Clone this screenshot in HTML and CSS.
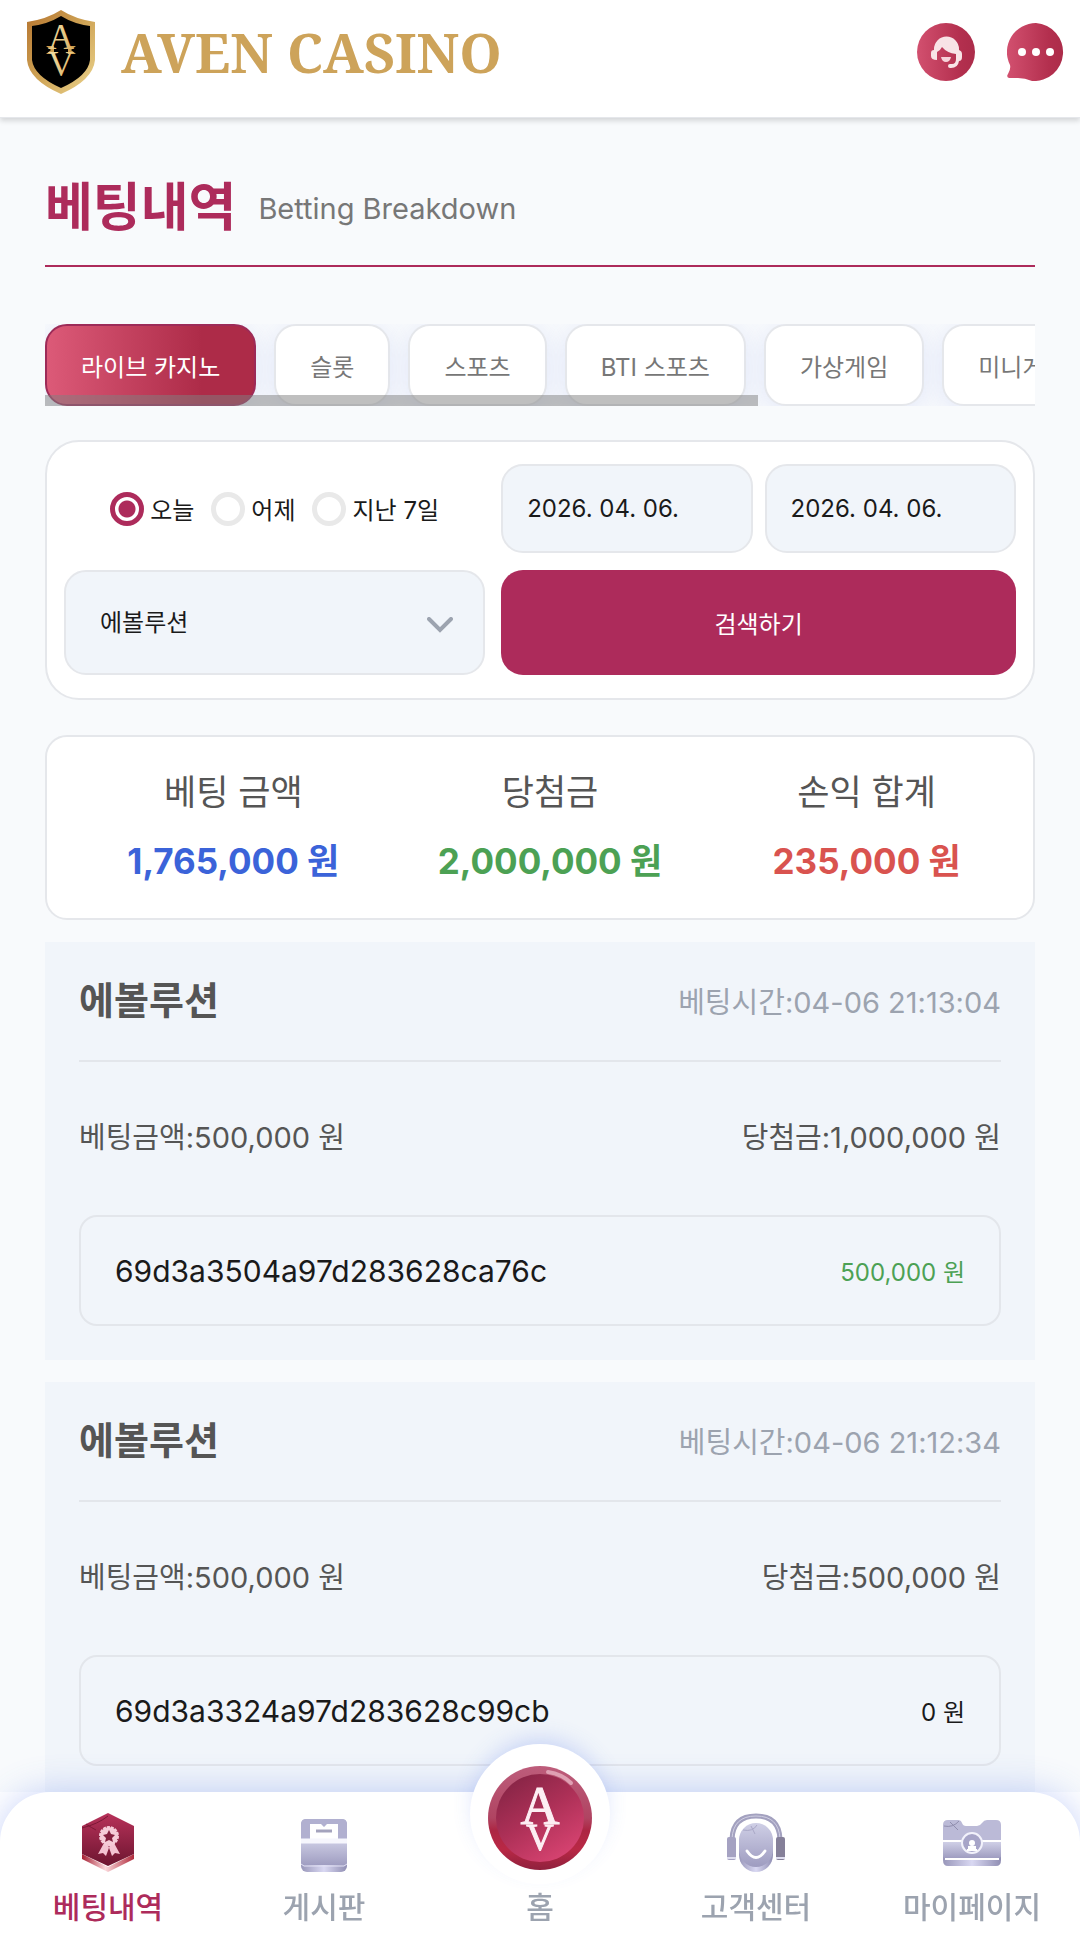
FILE: index.html
```html
<!DOCTYPE html>
<html lang="ko">
<head>
<meta charset="utf-8">
<meta name="viewport" content="width=device-width, initial-scale=1">
<title>AVEN CASINO - 베팅내역</title>
<link rel="stylesheet" href="styles.css">
</head>
<body>
<header class="header">
  <a class="brand" href="#">
    <svg class="brand-mark" viewBox="0 0 68 84" aria-hidden="true">
      <defs>
        <linearGradient id="gold" x1="0" y1="0" x2="1" y2="1">
          <stop offset="0" stop-color="#b5742f"/>
          <stop offset=".5" stop-color="#cfa456"/>
          <stop offset="1" stop-color="#ecd58f"/>
        </linearGradient>
        <linearGradient id="goldText" x1="0" y1="0" x2="1" y2="1">
          <stop offset="0" stop-color="#f6e6b0"/>
          <stop offset="1" stop-color="#d9ab5c"/>
        </linearGradient>
      </defs>
      <path d="M34 0Q48 9 68 12V50Q66 70 34 84Q2 70 0 50V12Q20 9 34 0Z" fill="url(#gold)"/>
      <path d="M34 6Q47 14 63 16V50Q61 66 34 78Q7 66 5 50V16Q21 14 34 6Z" fill="#000"/>
      <path d="M19 36l5 4-5 4h8v-8zM49 36l-5 4 5 4h-8v-8z" fill="#d0a050"/>
      <text class="mark-letter" x="34" y="39" font-size="36" fill="url(#goldText)">A</text>
      <text class="mark-letter" x="34" y="66" font-size="36" fill="url(#goldText)">V</text>
    </svg>
    <span class="brand-name">AVEN CASINO</span>
  </a>
  <div class="header-actions">
    <button class="icon-button" type="button" aria-label="고객센터">
      <svg viewBox="0 0 58 58" aria-hidden="true">
        <defs>
          <linearGradient id="rose" x1="0" y1="0" x2="1" y2="0">
            <stop offset="0" stop-color="#d2506f"/>
            <stop offset=".75" stop-color="#b32f4e"/>
            <stop offset="1" stop-color="#ac2c4a"/>
          </linearGradient>
        </defs>
        <circle cx="29" cy="29" r="29" fill="url(#rose)"/>
        <path d="M17 27V26a12 12 0 0 1 25 0v1q3 1 3 4v3q0 4-3 4-1 7-8 7h-1a2 2 0 0 1 0-4h2q4 0 4-5v-5q-9-1-14-7-2 4-5 5v8q-6 0-6-4v-3q0-3 3-3z" fill="#f8e3e6"/>
        <path d="M24 34h10q-1 5-5 5t-5-5z" fill="#f6d3da"/>
      </svg>
    </button>
    <button class="icon-button" type="button" aria-label="채팅">
      <svg viewBox="0 0 58 58" aria-hidden="true">
        <path d="M29 0a29 29 0 1 1-4 58q-7-3-14-3H2q-3-1-1-4 3-5 2-9A29 29 0 0 1 29 0z" fill="url(#rose)"/>
        <circle cx="15" cy="29" r="4" fill="#fff"/>
        <circle cx="29" cy="29" r="4" fill="#fff"/>
        <circle cx="43" cy="29" r="4" fill="#fff"/>
      </svg>
    </button>
  </div>
</header>

<main class="page">
  <div class="page-title">
    <h1>베팅내역</h1>
    <p>Betting Breakdown</p>
  </div>

  <div class="tabs">
    <div class="tab-list">
      <button class="tab tab-active" type="button">라이브 카지노</button>
      <button class="tab" type="button">슬롯</button>
      <button class="tab" type="button">스포츠</button>
      <button class="tab" type="button">BTI 스포츠</button>
      <button class="tab" type="button">가상게임</button>
      <button class="tab" type="button">미니게임</button>
    </div>
    <div class="tab-scrollbar"></div>
  </div>

  <form class="filter">
    <div class="periods">
      <label class="period"><input type="radio" name="period" checked><span>오늘</span></label>
      <label class="period"><input type="radio" name="period"><span>어제</span></label>
      <label class="period"><input type="radio" name="period"><span>지난 7일</span></label>
    </div>
    <div class="dates">
      <input class="field date" type="text" aria-label="시작일" value="2026. 04. 06.">
      <input class="field date" type="text" aria-label="종료일" value="2026. 04. 06.">
    </div>
    <div class="provider">
      <select class="field" aria-label="게임사"><option>에볼루션</option></select>
      <svg class="chevron" viewBox="0 0 26 16" aria-hidden="true"><path d="M2 2l11 11L24 2" fill="none" stroke="#9ca3af" stroke-width="4" stroke-linecap="round"/></svg>
    </div>
    <button class="search" type="button">검색하기</button>
  </form>

  <dl class="summary">
    <div><dt>베팅 금액</dt><dd class="blue">1,765,000 원</dd></div>
    <div><dt>당첨금</dt><dd class="green">2,000,000 원</dd></div>
    <div><dt>손익 합계</dt><dd class="red">235,000 원</dd></div>
  </dl>

  <article class="bet">
    <div class="bet-head">
      <h2>에볼루션</h2>
      <span class="bet-time">베팅시간:04-06 21:13:04</span>
    </div>
    <div class="bet-amounts"><span>베팅금액:500,000 원</span><span>당첨금:1,000,000 원</span></div>
    <div class="bet-round"><span>69d3a3504a97d283628ca76c</span><span class="bet-result green">500,000 원</span></div>
  </article>

  <article class="bet">
    <div class="bet-head">
      <h2>에볼루션</h2>
      <span class="bet-time">베팅시간:04-06 21:12:34</span>
    </div>
    <div class="bet-amounts"><span>베팅금액:500,000 원</span><span>당첨금:500,000 원</span></div>
    <div class="bet-round"><span>69d3a3324a97d283628c99cb</span><span class="bet-result">0 원</span></div>
  </article>
</main>

<nav class="bottom-nav">
  <div class="nav-list">
    <a class="nav-item nav-current" href="#">
      <svg class="nav-icon" viewBox="0 0 60 60" aria-hidden="true">
        <defs>
          <linearGradient id="wine" x1="0" y1="0" x2="0" y2="1">
            <stop offset="0" stop-color="#b8325a"/>
            <stop offset="1" stop-color="#6d1530"/>
          </linearGradient>
          <linearGradient id="wineEdge" x1="0" y1="0" x2="1" y2="0">
            <stop offset="0" stop-color="#a51f33"/>
            <stop offset=".45" stop-color="#fbd9dc"/>
            <stop offset="1" stop-color="#b02a3c"/>
          </linearGradient>
          <linearGradient id="lilac" x1="0" y1="0" x2="0" y2="1">
            <stop offset="0" stop-color="#cfcfe6"/>
            <stop offset="1" stop-color="#9e9cc0"/>
          </linearGradient>
          <linearGradient id="lilacEdge" x1="0" y1="0" x2="1" y2="0">
            <stop offset="0" stop-color="#9997ba"/>
            <stop offset=".5" stop-color="#d9d8f2"/>
            <stop offset="1" stop-color="#908eb3"/>
          </linearGradient>
        </defs>
        <path d="M4 42l26 13 26-13v5L30 60 4 47z" fill="url(#wineEdge)"/>
        <path d="M30 1l26 13v28L30 54 4 42V14z" fill="url(#wine)"/>
        <path d="M4 16q16-4 26-12M8 12q6 4 10 6" fill="none" stroke="#7c1836"/>
        <path d="M26 31l-6 11 5-1 3 3 4-11zM36 31l6 11-5-1-3 3-4-11z" fill="#f4c3d2"/>
        <circle cx="31" cy="24" r="9" fill="#f6cbd8" stroke="#f6cbd8" stroke-width="2" stroke-dasharray="3 1"/>
        <path d="M31 18l2 4 4 1-3 3 1 4-4-2-4 2 1-4-3-3 4-1z" fill="#85203f"/>
      </svg>
      <span>베팅내역</span>
    </a>
    <a class="nav-item" href="#">
      <svg class="nav-icon" viewBox="0 0 60 60" aria-hidden="true">
        <rect x="7" y="7" width="46" height="53" rx="6" fill="url(#lilacEdge)"/>
        <path d="M7 27V12q0-5 5-5h36q5 0 5 5v15z" fill="#b1b0d0"/>
        <path d="M16 27V12h11l3 3 3-3h11v15z" fill="#fff"/>
        <path d="M22 19h16" stroke="#a4a3bd" stroke-width="3"/>
        <path d="M7 27h46v26q-3 2-5 0H12q-2 2-5 0z" fill="url(#lilac)"/>
        <path d="M7 29h46" stroke="#f6f6fd" stroke-width="5"/>
        <path d="M7 52l3 2h40l3-2" fill="none" stroke="#e3e2f5"/>
      </svg>
      <span>게시판</span>
    </a>
    <a class="nav-item nav-home" href="#">
      <span class="home-badge">
        <svg viewBox="0 0 104 104" aria-hidden="true">
          <defs>
            <linearGradient id="rim" x1="0" y1="0" x2="0" y2="1">
              <stop offset="0" stop-color="#bd5d7b"/>
              <stop offset=".5" stop-color="#b04462"/>
              <stop offset=".62" stop-color="#ac2643"/>
              <stop offset=".8" stop-color="#b92845"/>
              <stop offset="1" stop-color="#8f203d"/>
            </linearGradient>
            <linearGradient id="face" x1=".1" y1="0" x2=".75" y2="1">
              <stop offset="0" stop-color="#812343"/>
              <stop offset=".5" stop-color="#ad3057"/>
              <stop offset="1" stop-color="#d94472"/>
            </linearGradient>
          </defs>
          <circle cx="52" cy="52" r="52" fill="url(#rim)"/>
          <circle cx="52" cy="52" r="44" fill="url(#face)"/>
          <path d="M60 6q14 2 23 11" fill="none" stroke="#dfa0b3" stroke-width="4" stroke-linecap="round"/>
          <text class="mark-letter" x="52" y="58" font-size="54" fill="#fdeef3" stroke="#fdeef3">A</text>
          <text class="mark-letter" x="52" y="84" font-size="38" fill="#fdeef3" stroke="#fdeef3">V</text>
        </svg>
      </span>
      <span>홈</span>
    </a>
    <a class="nav-item" href="#">
      <svg class="nav-icon" viewBox="0 0 60 60" aria-hidden="true">
        <path d="M6 27Q7 4 30 4t24 23" fill="none" stroke="#a3a1bf" stroke-width="5"/>
        <path d="M6 27Q7 4 30 4t24 23" fill="none" stroke="#d0cfe3" stroke-width="1"/>
        <rect x="13" y="14" width="34" height="46" rx="17" fill="url(#lilacEdge)"/>
        <rect x="13" y="11" width="34" height="44" rx="17" fill="url(#lilac)"/>
        <path d="M17 18q10 2 14-5M25 14l4 8" fill="none" stroke="#a9a7c6"/>
        <path d="M21 39q9 13 18 0" fill="none" stroke="#fff" stroke-width="3" stroke-linecap="round"/>
        <rect x="1" y="25" width="9" height="23" rx="2" fill="#a5a2c2"/>
        <rect x="50" y="25" width="9" height="23" rx="2" fill="#858099"/>
        <path d="M1 46h9M50 46h9" stroke="#deddef" stroke-width="2"/>
      </svg>
      <span>고객센터</span>
    </a>
    <a class="nav-item" href="#">
      <svg class="nav-icon" viewBox="0 0 60 60" aria-hidden="true">
        <path d="M1 40h58v8q0 6-5 6H6q-5 0-5-6z" fill="url(#lilacEdge)"/>
        <path d="M1 28V13q0-5 5-5h10q3 0 4 3t4 3h11q3 0 5-3t5-3h9q5 0 5 5v15z" fill="#bbbad7"/>
        <path d="M1 30h58v15q-3 2-5 1H6q-2 1-5-1z" fill="url(#lilac)"/>
        <path d="M1 29h58M3 47h54" stroke="#fff" stroke-width="2"/>
        <path d="M2 14q9 2 15-5M8 10l8 8" fill="none" stroke="#908eae"/>
        <circle cx="30" cy="31" r="10" fill="#a7a5c8" stroke="#f2f2fb" stroke-width="2"/>
        <circle cx="30" cy="31" r="3" fill="#fff"/>
        <path d="M26 34h8v3h1v2H25v-2h1z" fill="#fff"/>
      </svg>
      <span>마이페이지</span>
    </a>
  </div>
</nav>
</body>
</html>
```

FILE: styles.css
```css
* {
  box-sizing: border-box;
}

body {
  margin: 0;
  min-height: 100vh;
  background: #f8fafc;
  color: #1a1a1a;
  font-family: Inter, "Noto Sans CJK KR", sans-serif;
  font-size: 24px;
}

h1, h2, p, dl, dd {
  margin: 0;
}

a {
  color: inherit;
  text-decoration: none;
}

button, input, select {
  margin: 0;
  font: inherit;
  color: inherit;
}

svg {
  display: block;
}

.mark-letter {
  font-family: "Liberation Serif", serif;
  text-anchor: middle;
}

/* Header */
.header {
  display: flex;
  align-items: center;
  justify-content: space-between;
  height: 118px;
  padding: 0 15px 14px 26px;
  background: #fff;
  border-bottom: 1px solid #e5e7eb;
  box-shadow: 0 3px 5px rgba(0, 0, 0, 0.14);
}

.brand {
  display: flex;
  align-items: center;
  gap: 25px;
}

.brand-mark {
  width: 70px;
  height: 84px;
}

.brand-name {
  color: #cda35a;
  font-family: "Noto Serif", "Liberation Serif", serif;
  font-size: 54px;
  font-weight: 700;
  line-height: 60px;
}

.header-actions {
  display: flex;
  gap: 32px;
}

.icon-button {
  width: 58px;
  height: 58px;
  padding: 0;
  border: 0;
  background: none;
}

.page {
  padding: 50px 45px 155px;
}

/* Title */
.page-title {
  display: flex;
  align-items: center;
  gap: 22px;
  padding-bottom: 17px;
  border-bottom: 2px solid #ad2b5b;
}

.page-title h1 {
  color: #ad2b5b;
  font-size: 52px;
  font-weight: 700;
  line-height: 80px;
}

.page-title p {
  color: #777;
  font-size: 29px;
}

/* Category tabs */
.tabs {
  position: relative;
  margin-top: 57px;
  overflow: hidden;
}

.tab-list {
  display: flex;
  gap: 18px;
}

.tab {
  flex: none;
  height: 82px;
  padding: 0 34px;
  border: 2px solid #e5e7eb;
  border-radius: 22px;
  background: #fff;
  box-shadow: 0 4px 24px rgba(90, 110, 230, 0.14);
  color: #777;
}

.tab-active {
  border-color: #9d2b58;
  background: linear-gradient(90deg, #dc5a78, #ad2b48 75%);
  color: #fff;
}

.tab-scrollbar {
  position: absolute;
  left: 0;
  bottom: 0;
  width: 72%;
  height: 11px;
  background: rgba(128, 128, 128, 0.5);
}

/* Search filter */
.filter {
  display: grid;
  grid-template-columns: 45fr 55fr;
  gap: 17px 16px;
  margin-top: 34px;
  padding: 22px 17px 23px;
  border: 2px solid #e5e7eb;
  border-radius: 34px;
  background: #fff;
}

.periods {
  display: flex;
  align-items: center;
  justify-content: center;
  gap: 17px;
}

.period {
  display: flex;
  align-items: center;
  gap: 6px;
}

.period input {
  width: 34px;
  height: 34px;
  border: 5px solid #e9e9e9;
  border-radius: 50%;
  appearance: none;
  background: #fff;
}

.period input:checked {
  border-color: #ad2b5b;
  background: radial-gradient(#ad2b5b 8px, #fff 9px);
}

.dates {
  display: grid;
  grid-template-columns: 1fr 1fr;
  gap: 12px;
}

.field {
  width: 100%;
  min-width: 0;
  border: 2px solid #e5e7eb;
  border-radius: 22px;
  background: #f1f5fa;
}

.date {
  height: 89px;
  padding: 0 24px;
}

.provider {
  position: relative;
}

.provider select {
  height: 105px;
  padding: 0 34px;
  appearance: none;
}

.chevron {
  position: absolute;
  top: 47px;
  right: 32px;
  width: 26px;
  height: 16px;
  pointer-events: none;
}

.search {
  height: 105px;
  border: 0;
  border-radius: 22px;
  background: #ad2b5b;
  color: #fff;
}

/* Totals */
.summary {
  display: grid;
  grid-template-columns: repeat(3, 1fr);
  margin-top: 35px;
  padding: 31px 8px 32px 28px;
  border: 2px solid #e5e7eb;
  border-radius: 22px;
  background: #fff;
  text-align: center;
}

.summary dt {
  color: #555;
  font-size: 35px;
  font-weight: 400;
  line-height: 48px;
}

.summary dd {
  margin-top: 20px;
  font-size: 35px;
  font-weight: 700;
  line-height: 50px;
}

.blue {
  color: #3b63d9;
}

.green {
  color: #4ca154;
}

.red {
  color: #d9534f;
}

/* Bet records */
.bet {
  margin-top: 22px;
  padding: 34px;
  background: #f1f5fa;
  color: #555;
  font-size: 29px;
}

.bet-head {
  display: flex;
  align-items: center;
  justify-content: space-between;
  padding-bottom: 36px;
  border-bottom: 2px solid #e3e6eb;
}

.bet-head h2 {
  font-size: 38px;
  font-weight: 600;
  line-height: 48px;
}

.bet-time {
  color: #9ca3af;
}

.bet-amounts {
  display: flex;
  justify-content: space-between;
  padding: 56px 0 57px;
  line-height: 40px;
}

.bet-round {
  display: flex;
  align-items: center;
  justify-content: space-between;
  height: 111px;
  padding: 0 34px;
  border: 2px solid #e3e6eb;
  border-radius: 18px;
  color: #1a1a1a;
  font-size: 30px;
}

.bet-result {
  font-size: 24px;
}

.bet-result.green {
  color: #4ca154;
}

/* Bottom navigation */
.bottom-nav {
  position: fixed;
  right: 0;
  bottom: 0;
  left: 0;
  background: #fff;
}

.nav-list {
  display: grid;
  grid-template-columns: repeat(5, 1fr);
  height: 161px;
  padding-top: 20px;
  border-radius: 50px 50px 0 0;
  background: #fff;
  box-shadow: 0 0 36px rgba(70, 105, 235, 0.3);
}

.nav-item {
  display: flex;
  flex-direction: column;
  align-items: center;
  gap: 14px;
  color: #9ca3af;
  font-size: 30px;
  font-weight: 500;
  line-height: 42px;
}

.nav-current {
  color: #ad2b5b;
}

.nav-icon {
  width: 60px;
  height: 60px;
}

.nav-home {
  gap: 2px;
}

.home-badge {
  width: 140px;
  height: 140px;
  margin-top: -68px;
  padding: 22px 18px 14px;
  border-radius: 50%;
  background: #fff;
  box-shadow: 0 -10px 24px -8px rgba(70, 105, 235, 0.3);
}
```
